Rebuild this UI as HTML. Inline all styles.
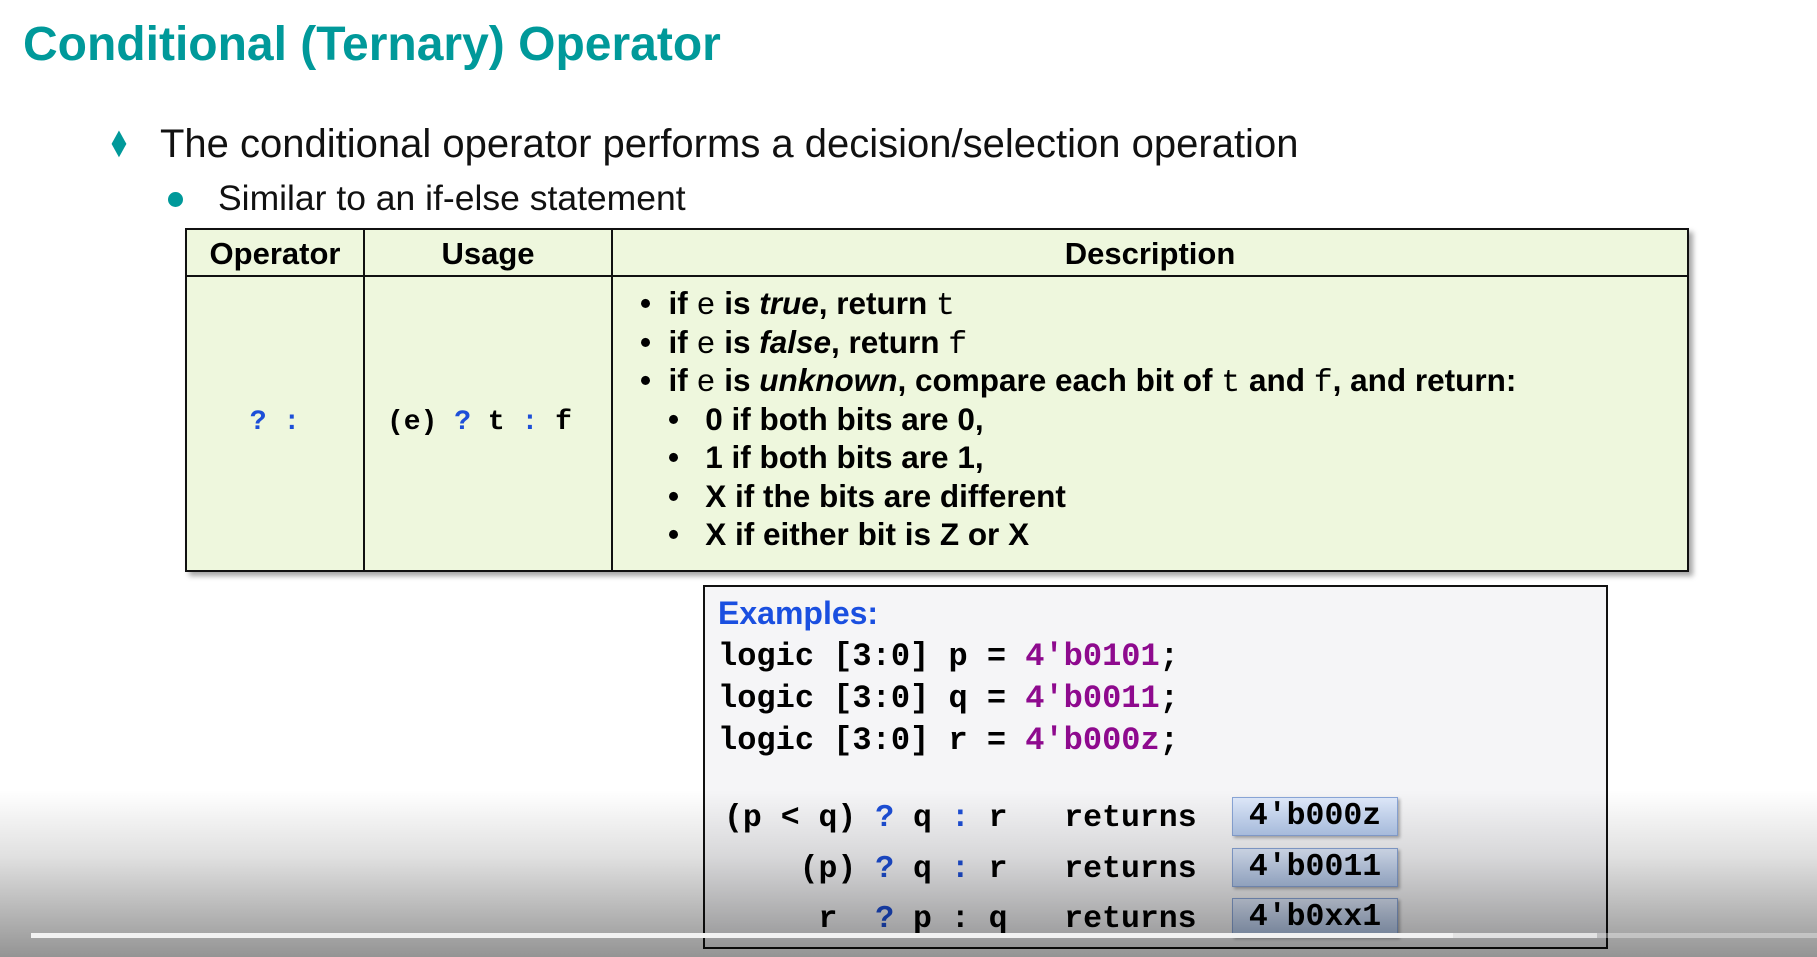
<!DOCTYPE html>
<html><head><meta charset="utf-8"><style>
body{margin:0;width:1817px;height:957px;background:#fff;position:relative;overflow:hidden;font-family:"Liberation Sans",Arial,sans-serif}
.a{position:absolute;white-space:nowrap}
.mono{font-family:"Liberation Mono","Courier New",monospace;font-weight:bold}
.d div{height:38.5px;line-height:38.5px}
.d .mono{line-height:0;font-weight:normal}
.bl{color:#1d4fd8}.pu{color:#8e0a8e}
.bx{position:absolute;left:1232px;width:164px;height:37px;line-height:37px;text-align:center;font-size:31.5px;background:linear-gradient(#dfe9fb,#b5cbee);border:1px solid #8aa6d8;box-shadow:2px 2px 3px rgba(0,0,0,.3)}
</style></head><body>
<div class="a" style="left:23px;top:17px;font-size:48px;font-weight:bold;color:#00999a">Conditional (Ternary) Operator</div>
<div class="a" style="left:109px;top:126px;font-size:26px;color:#00999a;transform:scaleX(0.75) scaleY(1.35)">&#9670;</div>
<div class="a" style="left:160px;top:122px;font-size:40px;color:#111">The conditional operator performs a decision/selection operation</div>
<div class="a" style="left:168px;top:192px;width:15px;height:15px;border-radius:50%;background:#00999a"></div>
<div class="a" style="left:218px;top:178px;font-size:35.5px;color:#111">Similar to an if-else statement</div>

<div class="a" style="left:185px;top:228px;width:1500px;height:340px;background:#eef7dd;border:2px solid #111;box-shadow:4px 4px 5px rgba(0,0,0,.35)"></div>
<div class="a" style="left:185px;top:275px;width:1502px;height:2px;background:#111"></div>
<div class="a" style="left:363px;top:228px;width:2px;height:342px;background:#111"></div>
<div class="a" style="left:611px;top:228px;width:2px;height:342px;background:#111"></div>
<div class="a" style="left:187px;top:236px;width:176px;text-align:center;font-size:31px;font-weight:bold">Operator</div>
<div class="a" style="left:365px;top:236px;width:246px;text-align:center;font-size:31px;font-weight:bold">Usage</div>
<div class="a" style="left:613px;top:236px;width:1074px;text-align:center;font-size:31px;font-weight:bold">Description</div>
<div class="a mono bl" style="left:187px;top:407px;width:176px;text-align:center;font-size:28px">? :</div>
<div class="a mono" style="left:387px;top:407px;font-size:28px">(e) <span class="bl">?</span> t <span class="bl">:</span> f</div>
<div class="a d" style="left:640px;top:284px;font-size:31.5px;font-weight:bold">
<div>• &nbsp;if <span class="mono">e</span> is <i>true</i>, return <span class="mono">t</span></div>
<div>• &nbsp;if <span class="mono">e</span> is <i>false</i>, return <span class="mono">f</span></div>
<div>• &nbsp;if <span class="mono">e</span> is <i>unknown</i>, compare each bit of <span class="mono">t</span> and <span class="mono">f</span>, and return:</div>
<div style="padding-left:28px">• &nbsp;&nbsp;0 if both bits are 0,</div>
<div style="padding-left:28px">• &nbsp;&nbsp;1 if both bits are 1,</div>
<div style="padding-left:28px">• &nbsp;&nbsp;X if the bits are different</div>
<div style="padding-left:28px">• &nbsp;&nbsp;X if either bit is Z or X</div></div>

<div class="a" style="left:703px;top:585px;width:901px;height:360px;border:2px solid #111;background:#f5f5f7"></div>
<div class="a" style="left:718px;top:595px;font-size:32px;font-weight:bold;color:#1a4fe0">Examples:</div>
<div class="a mono" style="left:718px;top:636px;font-size:32px;line-height:42px">logic [3:0] p = <span class="pu">4'b0101</span>;<br>logic [3:0] q = <span class="pu">4'b0011</span>;<br>logic [3:0] r = <span class="pu">4'b000z</span>;</div>
<div class="bx mono" style="top:797px">4'b000z</div>
<div class="bx mono" style="top:848px">4'b0011</div>
<div class="bx mono" style="top:898px">4'b0xx1</div>
<div class="a mono" style="white-space:pre;left:724px;top:794px;font-size:31.5px;line-height:50.5px">(p &lt; q) <span class="bl">?</span> q <span class="bl">:</span> r   returns
    (p) <span class="bl">?</span> q <span class="bl">:</span> r   returns
     r  <span class="bl">?</span> p : q   returns</div>

<div class="a" style="left:0;top:790px;width:1817px;height:167px;background:linear-gradient(rgba(0,0,0,0),rgba(0,0,0,.12) 40%,rgba(0,0,0,.42))"></div>
<div class="a" style="left:31px;top:933px;width:1786px;height:5px;background:rgba(255,255,255,.35)"></div>
<div class="a" style="left:31px;top:933px;width:1566px;height:5px;background:rgba(255,255,255,.55)"></div>
<div class="a" style="left:31px;top:933px;width:1422px;height:5px;background:#f2f2f2"></div>
</body></html>
